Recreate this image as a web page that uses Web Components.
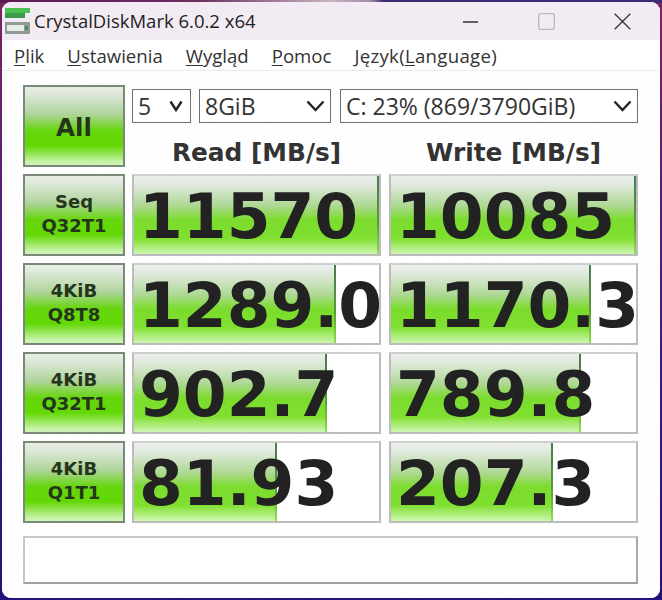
<!DOCTYPE html>
<html><head><meta charset="utf-8"><style>
html,body{margin:0;padding:0;height:600px;overflow:hidden}
body{font-family:"Open Sans","Liberation Sans",sans-serif;background:linear-gradient(90deg,#5a1a50 0,#6a3060 30%,#c8b4c0 50%,#a08aa8 56%,#3a2a70 58%,#3a2a78 100%) top/100% 3px no-repeat,linear-gradient(180deg,#7a2460 0,#3a1a88 60%,#24107a 100%)}
</style></head><body>
<cdm-window>
<cdm-titlebar title="CrystalDiskMark 6.0.2 x64"></cdm-titlebar>
<cdm-menu></cdm-menu>
<cdm-main>
<cdm-button big>All</cdm-button>
<cdm-controls></cdm-controls>
<cdm-button>Seq<br>Q32T1</cdm-button>
<cdm-meter value="11570" pct="100"></cdm-meter>
<cdm-meter w value="10085" pct="100"></cdm-meter>
<cdm-button>4KiB<br>Q8T8</cdm-button>
<cdm-meter value="1289.0" pct="82.4"></cdm-meter>
<cdm-meter w value="1170.3" pct="81.6"></cdm-meter>
<cdm-button>4KiB<br>Q32T1</cdm-button>
<cdm-meter value="902.7" pct="78.8"></cdm-meter>
<cdm-meter w value="789.8" pct="77.6"></cdm-meter>
<cdm-button>4KiB<br>Q1T1</cdm-button>
<cdm-meter value="81.93" pct="58.4"></cdm-meter>
<cdm-meter w value="207.3" pct="66"></cdm-meter>
<cdm-comment></cdm-comment>
</cdm-main>
</cdm-window>
<script>
function def(name,html){
  customElements.define(name,class extends HTMLElement{
    connectedCallback(){
      if(this.shadowRoot)return;
      const r=this.attachShadow({mode:'open'});
      r.innerHTML=typeof html==='function'?html(this):html;
    }
  });
}
def('cdm-window',`<style>:host{display:flex;flex-direction:column;box-sizing:border-box;margin:2px 2px 0 2px;height:596px;border-radius:9px;overflow:hidden;background:#fff}</style><slot></slot>`);
def('cdm-titlebar',e=>`<style>:host{display:flex;align-items:center;height:38px;flex:none;background:#f3ebf4;color:#222;font-size:18.5px}
.ic{margin:0 3px 0 3px;flex:none;display:block}
.t{flex:1;padding-bottom:2px}
.b{width:76px;display:flex;justify-content:center;align-items:center;flex:none}
</style>
<svg class="ic" width="26" height="26" viewBox="0 0 26 26"><rect x="0" y="0" width="25" height="5" fill="#4cc050"/><rect x="0" y="5" width="20" height="5" fill="#3a9a48"/><rect x="0" y="14" width="25" height="12" rx="1" fill="#8f9a92"/><rect x="2" y="17" width="17" height="6" fill="#e6ece6"/><rect x="20" y="18" width="3" height="4" fill="#4a8a5a"/></svg>
<span class="t">${e.getAttribute('title')}</span>
<span class="b"><svg width="17" height="17" viewBox="0 0 17 17"><path d="M1 9H16" stroke="#333" stroke-width="1.3"/></svg></span>
<span class="b"><svg width="17" height="17" viewBox="0 0 17 17"><rect x=".7" y=".7" width="15.6" height="15.6" rx="2" fill="none" stroke="#bcb6c0" stroke-width="1.3"/></svg></span>
<span class="b"><svg width="17" height="17" viewBox="0 0 17 17"><path d="M.7 .7L16.3 16.3M16.3 .7L.7 16.3" stroke="#333" stroke-width="1.3" fill="none"/></svg></span>`);
def('cdm-menu',`<style>:host{display:flex;flex:none;align-items:center;height:31px;box-sizing:border-box;border-bottom:1px solid #eeeaee;padding:1px 0 0 12px;gap:23px;font-size:18.6px;color:#333;background:#fff}
u{text-underline-offset:2px;text-decoration-thickness:1px}
.l{letter-spacing:.3px}</style>
<span><u>P</u>lik</span><span><u>U</u>stawienia</span><span><u>W</u>ygląd</span><span><u>P</u>omoc</span><span class="l">Język(<u>L</u>anguage)</span>`);
def('cdm-main',`<style>:host{display:grid;grid-template-columns:102px 249px 250px;column-gap:7px;row-gap:7px;grid-template-rows:repeat(5,82px);padding:14px 0 0 21px;flex:1;align-content:start;background:repeating-linear-gradient(135deg,#fff 0 3px,#fbfbfb 3px 4px)}
::slotted(cdm-controls){grid-column:2 / 4}
::slotted(cdm-comment){grid-column:1 / -1;margin-top:6px}</style><slot></slot>`);
def('cdm-button',`<style>:host{display:flex;align-items:center;justify-content:center;text-align:center;box-sizing:border-box;padding-bottom:2px;border:2px solid #7a8a78;font:bold 18px/24px "DejaVu Sans",sans-serif;color:#25351c;background:linear-gradient(#e8eee6 0%,#e0e9dd 8%,#aed49a 35%,#66d60e 56%,#62d804 75%,#ccf4b0 97%)}
:host([big]){font-size:24.5px;padding:4px 0 0}</style><slot></slot>`);
def('cdm-select',e=>{const s=e.hasAttribute('small');return `<style>:host{display:flex;align-items:center;justify-content:space-between;box-sizing:border-box;height:34px;border:1px solid #707070;padding:0 ${s?7:5}px 0 5px;font-size:23px;color:#333;background:#fff}
svg{display:block;flex:none}</style><span>${e.getAttribute('value')}</span><svg width="${s?14:19}" height="12" viewBox="0 0 ${s?14:19} 12" style="margin-top:-1px"><path d="M1.5 1.5L${s?7:9.5} 10L${s?12.5:17.5} 1.5" fill="none" stroke="#222" stroke-width="2.4"/></svg>`});
def('cdm-controls',`<style>:host{display:grid;grid-template-columns:59px 132px 299px;column-gap:8px;grid-template-rows:34px 1fr;padding-top:4px;box-sizing:border-box}
cdm-select:nth-of-type(3){margin-left:1px}
h2{margin:0;font:bold 24.8px/28px "DejaVu Sans",sans-serif;color:#333;text-align:center}
.h{grid-column:1 / -1;display:grid;grid-template-columns:249px 249px;column-gap:8px;margin-top:16px}
</style><cdm-select small value="5"></cdm-select><cdm-select value="8GiB"></cdm-select><cdm-select value="C: 23% (869/3790GiB)"></cdm-select>
<div class="h"><h2>Read [MB/s]</h2><h2>Write [MB/s]</h2></div>`);
def('cdm-meter',e=>`<style>:host{display:block;position:relative;box-sizing:border-box;border:2px solid #bcbcbc;border-top-color:#cfcfcf;background:#fff}
:host([w]){margin-left:1px}
.bar{position:absolute;left:0;top:0;bottom:0;background:linear-gradient(#ecefec 0%,#dfe9db 12%,#aed894 38%,#7cdc2e 56%,#80e030 80%,#cff6b2 100%)}
.bar::after{content:"";position:absolute;right:0;top:0;bottom:0;width:2px;background:linear-gradient(#4a7a50,#5a9a3c 60%,#8ee04a)}
.v{position:relative;display:block;text-align:left;padding-left:5px;font:bold 63px/82px "DejaVu Sans",sans-serif;color:#222;white-space:nowrap}
</style><div class="bar" style="width:${e.getAttribute('pct')}%"></div><span class="v">${e.getAttribute('value')}</span>`);
def('cdm-comment',`<style>:host{display:block;box-sizing:border-box;height:48px;width:615px;border:2px solid #c8c8c8;border-bottom-color:#a0a0a0;border-right-color:#a8a8a8;background:#fff}</style>`);
</script>
</body></html>
